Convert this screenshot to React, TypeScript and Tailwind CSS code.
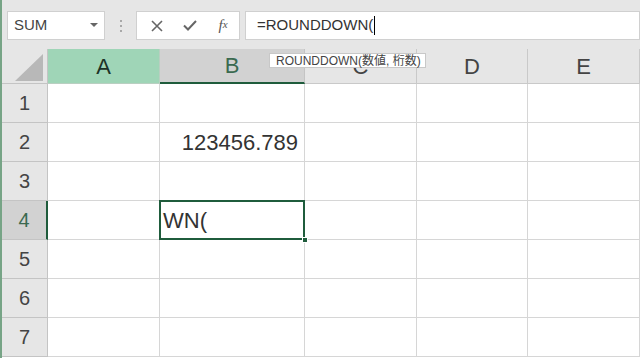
import React from "react";

const columns = ["A", "B", "C", "D", "E"];
const rows = [1, 2, 3, 4, 5, 6, 7];

function HeaderCell({ label }: { label: string }) {
  if (label === "A") {
    return (
      <div className="flex items-center justify-center border-r border-b border-[#b9cfc1] bg-[#9fd5b7] text-[22px] text-[#1d3327]">
        {label}
      </div>
    );
  }
  if (label === "B") {
    return (
      <div className="flex items-center justify-center border-r border-[#c4c4c4] border-b-2 border-b-[#1f5c3c] bg-[#d2d2d2] text-[22px] text-[#3b6a50]">
        {label}
      </div>
    );
  }
  return (
    <div className="flex items-center justify-center border-r border-b border-[#c9c9c9] bg-[#e6e6e6] text-[22px] text-[#444]">
      {label}
    </div>
  );
}

function Cell({ col, row }: { col: string; row: number }) {
  if (col === "B" && row === 2) {
    return (
      <div className="flex items-center justify-end border-r border-b border-[#d6d6d6] pr-[6px] text-[22px] text-[#333]">
        123456.789
      </div>
    );
  }
  if (col === "B" && row === 4) {
    return (
      <div className="relative flex items-center border-r border-b border-[#d6d6d6] pl-[3px] text-[22px] text-[#333]">
        WN(
        <div className="absolute -left-px -top-px -right-px -bottom-px border-2 border-[#1f5c3c]" />
        <div className="absolute -right-[4px] -bottom-[4px] h-[6px] w-[6px] border border-white bg-[#1f5c3c]" />
      </div>
    );
  }
  return <div className="border-r border-b border-[#d6d6d6]" />;
}

export default function App() {
  return (
    <div className="relative h-[358px] w-[640px] overflow-hidden border-l-2 border-[#77a486] bg-white font-['Liberation_Sans',sans-serif]">
      {/* formula bar */}
      <div className="flex h-[49px] items-start bg-[#e6e6e6] pt-[11px] pl-[5px]">
        <div className="flex h-[29px] w-[98px] items-center justify-between border border-[#d0d0d0] bg-white pl-[6px] pr-[6px] text-[15px] text-[#444]">
          <span>SUM</span>
          <svg width="8" height="5" viewBox="0 0 8 5">
            <path d="M0 0 L8 0 L4 4 Z" fill="#666" />
          </svg>
        </div>
        <div className="flex h-[29px] w-[31px] flex-col items-center justify-center gap-[3px]">
          <span className="h-[2px] w-[2px] bg-[#a8a8a8]" />
          <span className="h-[2px] w-[2px] bg-[#a8a8a8]" />
          <span className="h-[2px] w-[2px] bg-[#a8a8a8]" />
        </div>
        <div className="flex h-[29px] w-[104px] items-center border border-[#d0d0d0] bg-white">
          <div className="flex w-[35px] justify-center pl-[4px]">
            <svg width="12" height="12" viewBox="0 0 12 12">
              <path d="M1 1 L11 11 M11 1 L1 11" stroke="#666" strokeWidth="1.6" />
            </svg>
          </div>
          <div className="flex w-[35px] justify-center">
            <svg width="14" height="11" viewBox="0 0 14 11">
              <path d="M1 5.5 L5 9.5 L13 1" stroke="#666" strokeWidth="2" fill="none" />
            </svg>
          </div>
          <div className="flex w-[32px] justify-center font-['Liberation_Serif',serif] text-[15px] italic text-[#555]">
            f<span className="text-[11px] leading-[20px]">x</span>
          </div>
        </div>
        <div className="ml-[5px] flex h-[29px] flex-1 items-center border border-[#d0d0d0] bg-white pl-[11px] text-[15px] text-[#333]">
          <span>=ROUNDDOWN(</span>
          <span className="ml-[1px] h-[19px] w-px bg-black" />
        </div>
      </div>

      {/* sheet */}
      <div className="grid grid-cols-[46px_112px_145px_112px_111px_1fr] grid-rows-[35px_repeat(7,39px)]">
        <div className="flex items-end justify-end border-r border-b border-[#c4c4c4] bg-[#e6e6e6] pr-[4px] pb-[2px]">
          <svg width="28" height="27" viewBox="0 0 28 27">
            <path d="M0 27 L28 27 L28 0 Z" fill="#b8b8b8" />
          </svg>
        </div>
        {columns.map((c) => (
          <HeaderCell key={c} label={c} />
        ))}
        {rows.map((r) => (
          <React.Fragment key={r}>
            {r === 4 ? (
              <div className="flex items-center justify-center border-r-2 border-r-[#1f5c3c] border-b border-b-[#c4c4c4] bg-[#d2d2d2] text-[20px] text-[#3b6a50]">
                {r}
              </div>
            ) : (
              <div className="flex items-center justify-center border-r border-b border-[#c4c4c4] bg-[#e6e6e6] text-[20px] text-[#444]">
                {r}
              </div>
            )}
            {columns.map((c) => (
              <Cell key={c} col={c} row={r} />
            ))}
          </React.Fragment>
        ))}
      </div>

      {/* function tooltip */}
      <div className="absolute left-[267px] top-[53px] flex h-[15px] w-[157px] items-center border border-[#c8c8c8] bg-white pl-[6px] font-['Liberation_Sans','Noto_Sans_CJK_JP',sans-serif] text-[12px] text-[#444]">
        ROUNDDOWN(数値, 桁数)
      </div>
    </div>
  );
}
